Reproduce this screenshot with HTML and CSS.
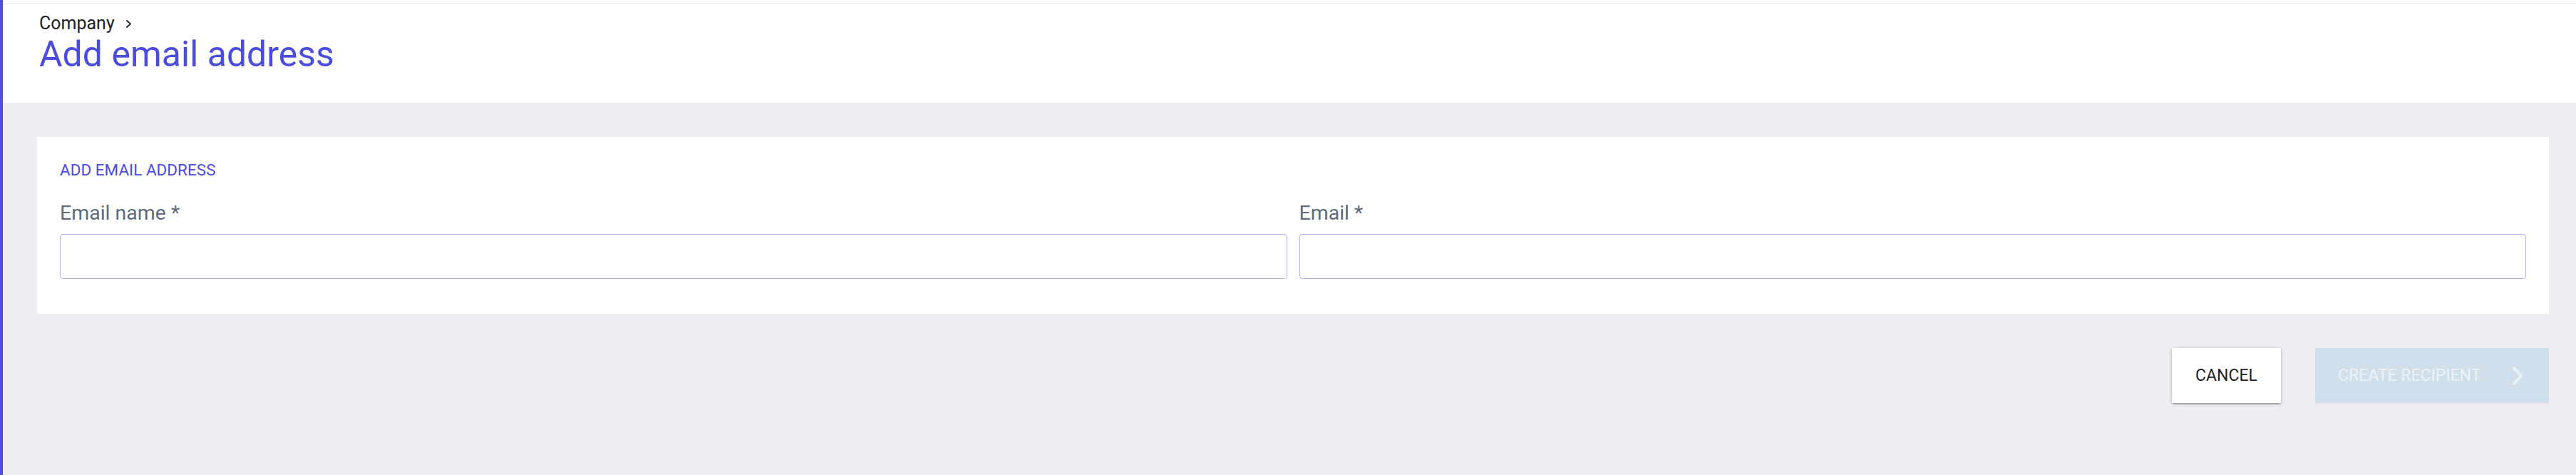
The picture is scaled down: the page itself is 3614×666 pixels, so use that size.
FILE: index.html
```html
<!DOCTYPE html>
<html lang="en">
<head>
<meta charset="utf-8">
<title>Add email address</title>
<link rel="stylesheet" href="styles.css">
</head>
<body>
<div class="app">
  <div class="main">
    <div class="topbar"></div>
    <header class="page-header">
      <nav class="breadcrumb">
        <span>Company</span>
        <svg class="crumb-chevron" width="10" height="13" viewBox="0 0 10 13"><path d="M1.5 1.5 L7 6.5 L1.5 11.5" fill="none" stroke="#222" stroke-width="1.8"/></svg>
      </nav>
      <h1 class="page-title">Add email address</h1>
    </header>
    <section class="content">
      <div class="card">
        <h2 class="card-title">ADD EMAIL ADDRESS</h2>
        <div class="fields">
          <label class="field">
            <span class="field-label">Email name *</span>
            <input class="field-input" type="text">
          </label>
          <label class="field">
            <span class="field-label">Email *</span>
            <input class="field-input" type="text">
          </label>
        </div>
      </div>
      <div class="actions">
        <button class="btn btn-cancel">CANCEL</button>
        <button class="btn btn-create" disabled>
          <span>CREATE RECIPIENT</span>
          <svg class="btn-chevron" width="17" height="28" viewBox="0 0 17 28"><path d="M2.5 3 L13.5 14 L2.5 25" fill="none" stroke="#eef1f5" stroke-width="3.4" stroke-linecap="round" stroke-linejoin="round"/></svg>
        </button>
      </div>
    </section>
  </div>
</div>
</body>
</html>
```

FILE: styles.css
```css
* { box-sizing: border-box; }
html, body { margin: 0; padding: 0; }
body {
  background: #ededf2;
  font-family: Roboto, "Noto Sans", sans-serif;
  color: #222;
}
.app {
  display: flex;
  min-height: 100vh;
  border-left: 4px solid #4f4fdc;
}
.main { flex: 1; display: flex; flex-direction: column; }
.topbar {
  height: 6px;
  background: #fff;
  border-bottom: 1px solid #e9e9ee;
}
.page-header {
  background: #fff;
  padding: 12px 0 39px 51px;
}
.breadcrumb {
  display: flex;
  align-items: center;
  gap: 15px;
  height: 29px;
  font-size: 25px;
  line-height: 29px;
  color: #222;
}
.crumb-chevron { margin-top: 2px; }
.page-title {
  margin: 0;
  font-size: 50px;
  line-height: 58px;
  font-weight: 400;
  color: #4b4bdc;
}
.content {
  padding: 48px 38px 0 48px;
}
.card {
  background: #fff;
  padding: 32px 32px 49px 32px;
}
.card-title {
  margin: 0;
  font-size: 22.5px;
  line-height: 28px;
  font-weight: 400;
  color: #4b4bdc;
}
.fields {
  display: grid;
  grid-template-columns: 1fr 1fr;
  gap: 17px;
  margin-top: 30px;
}
.field { display: flex; flex-direction: column; }
.field-label {
  font-size: 28.5px;
  line-height: 34px;
  color: #5d6b7a;
}
.field-input {
  margin-top: 12px;
  height: 63px;
  border: 1px solid #b4b0ee;
  border-radius: 4px;
  background: #fff;
  font: inherit;
  outline: none;
}
.actions {
  display: flex;
  justify-content: flex-end;
  gap: 48px;
  padding-top: 48px;
}
.btn {
  height: 77px;
  border: none;
  font-family: inherit;
  font-size: 23px;
  display: flex;
  align-items: center;
  justify-content: center;
  padding: 0;
}
.btn-cancel {
  width: 153px;
  background: #fff;
  color: #222;
  box-shadow: 0 2px 2px rgba(0, 0, 0, 0.14), 0 3px 1px -2px rgba(0, 0, 0, 0.12), 0 1px 5px rgba(0, 0, 0, 0.2);
}
.btn-create {
  width: 328px;
  background: #cfe0ec;
  color: #eef1f5;
  justify-content: space-between;
  padding: 0 35px 0 32px;
  box-shadow: 0 1px 3px rgba(0, 0, 0, 0.04);
}
```
